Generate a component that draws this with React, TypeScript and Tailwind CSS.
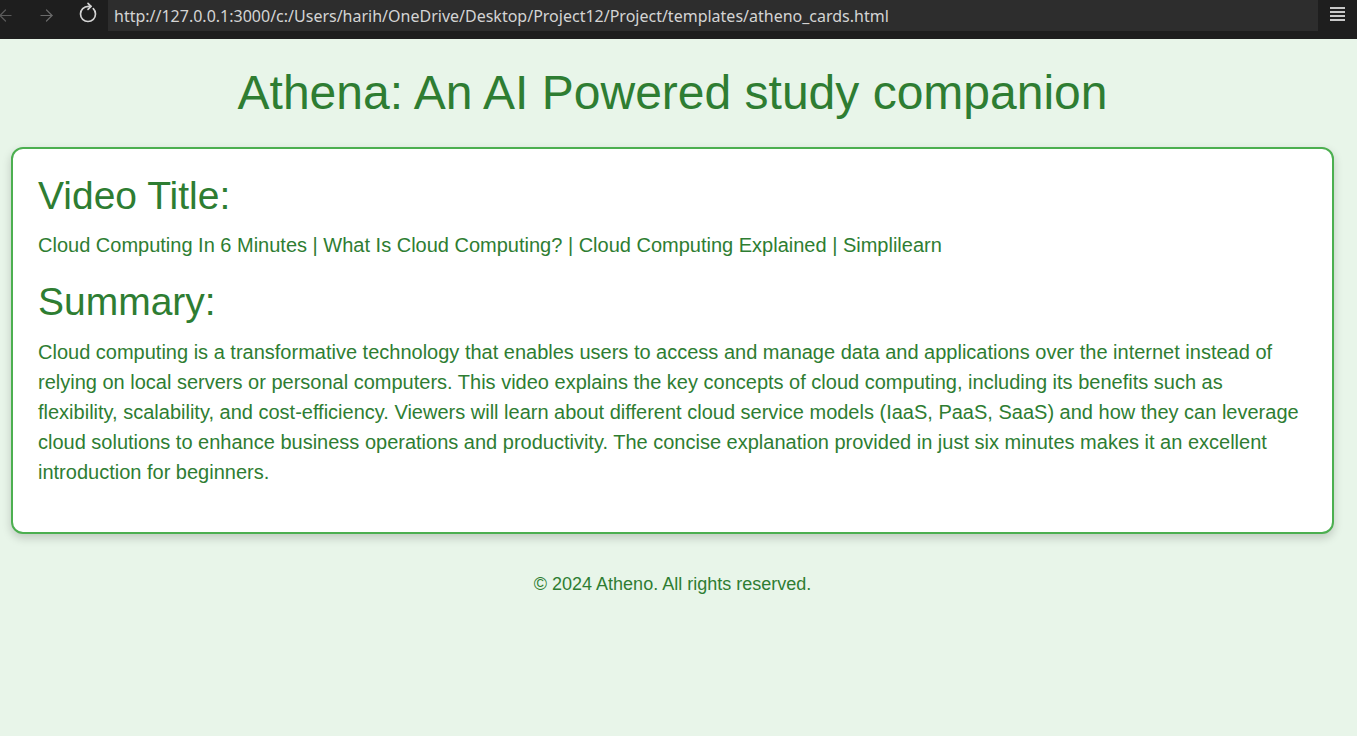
import { ArrowLeft, ArrowRight, RotateCw } from "lucide-react";

const VIDEO_TITLE =
  "Cloud Computing In 6 Minutes | What Is Cloud Computing? | Cloud Computing Explained | Simplilearn";

const SUMMARY =
  "Cloud computing is a transformative technology that enables users to access and manage data and applications over the internet instead of relying on local servers or personal computers. This video explains the key concepts of cloud computing, including its benefits such as flexibility, scalability, and cost-efficiency. Viewers will learn about different cloud service models (IaaS, PaaS, SaaS) and how they can leverage cloud solutions to enhance business operations and productivity. The concise explanation provided in just six minutes makes it an excellent introduction for beginners.";

const BrowserBar = () => (
  <div className="h-[39px] bg-[#1e1e1e] flex items-start">
    <div className="w-[108px] h-[31px] relative text-[#cccccc]">
      <ArrowLeft className="absolute left-[-4px] top-[6px] text-[#5a5a5a]" size={19} strokeWidth={1.5} />
      <ArrowRight className="absolute left-[37px] top-[6px] text-[#6a6a6a]" size={19} strokeWidth={1.5} />
      <RotateCw className="absolute left-[78px] top-[4px] -rotate-45 text-[#d4d4d4]" size={20} strokeWidth={2} />
    </div>
    <div className="w-[1210px] h-[31px] bg-[#2d2d2d] flex items-center pl-[6px] text-[16px] text-[#d4d4d4] font-['Noto_Sans','Liberation_Sans',sans-serif]">
      http://127.0.0.1:3000/c:/Users/harih/OneDrive/Desktop/Project12/Project/templates/atheno_cards.html
    </div>
    <div className="flex-1 h-[31px] flex justify-center pt-[7px]">
      <div className="flex flex-col gap-[2px] w-[15px]">
        <span className="h-[2px] bg-[#c8c8c8]" />
        <span className="h-[2px] bg-[#c8c8c8]" />
        <span className="h-[2px] bg-[#c8c8c8]" />
        <span className="h-[2px] bg-[#c8c8c8]" />
      </div>
    </div>
  </div>
);

export default function App() {
  return (
    <div className="w-[1357px] h-[736px] overflow-hidden bg-[#e8f5e9] font-['Liberation_Sans',Arial,sans-serif]">
      <BrowserBar />
      <div className="w-[1345px]">
        <h1 className="mt-[26px] text-center text-[48px] leading-[55px] text-[#2e7d32]">
          Athena: An AI Powered study companion
        </h1>
        <div className="mt-[27px] mx-[11px] bg-white border-2 border-[#4caf50] rounded-[12px] px-[25px] pt-[25px] pb-[45px] shadow-[0_4px_10px_rgba(0,0,0,0.18)]">
          <h2 className="text-[39px] leading-[44px] text-[#2e7d32]">Video Title:</h2>
          <p className="mt-[12px] text-[20px] leading-[30px] text-[#2e7d32]">{VIDEO_TITLE}</p>
          <h2 className="mt-[20px] text-[39px] leading-[44px] text-[#2e7d32]">Summary:</h2>
          <p className="mt-[13px] text-[20px] leading-[30px] text-[#2e7d32]">{SUMMARY}</p>
        </div>
        <footer className="mt-[40px] text-center text-[18px] leading-[21px] text-[#2e7d32]">
          © 2024 Atheno. All rights reserved.
        </footer>
      </div>
    </div>
  );
}
